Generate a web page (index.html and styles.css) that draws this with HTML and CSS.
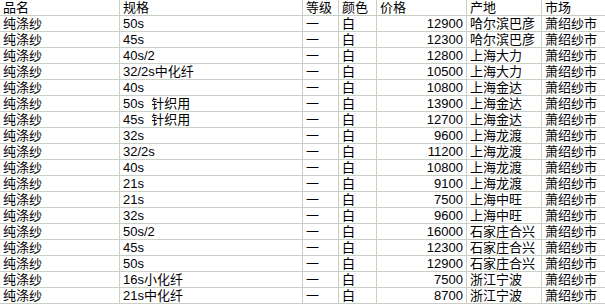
FILE: index.html
```html
<!DOCTYPE html>
<html lang="zh">
<head>
<meta charset="utf-8">
<link rel="stylesheet" href="styles.css">
</head>
<body>
<div class="sheet">
  <div class="row">
    <div class="c">品名</div><div class="c">规格</div><div class="c">等级</div><div class="c">颜色</div><div class="c">价格</div><div class="c">产地</div><div class="c">市场</div>
  </div>
  <div class="row"><div class="c">纯涤纱</div><div class="c">50s</div><div class="c">一</div><div class="c">白</div><div class="c num">12900</div><div class="c">哈尔滨巴彦</div><div class="c">萧绍纱市</div></div>
  <div class="row"><div class="c">纯涤纱</div><div class="c">45s</div><div class="c">一</div><div class="c">白</div><div class="c num">12300</div><div class="c">哈尔滨巴彦</div><div class="c">萧绍纱市</div></div>
  <div class="row"><div class="c">纯涤纱</div><div class="c">40s/2</div><div class="c">一</div><div class="c">白</div><div class="c num">12800</div><div class="c">上海大力</div><div class="c">萧绍纱市</div></div>
  <div class="row"><div class="c">纯涤纱</div><div class="c">32/2s中化纤</div><div class="c">一</div><div class="c">白</div><div class="c num">10500</div><div class="c">上海大力</div><div class="c">萧绍纱市</div></div>
  <div class="row"><div class="c">纯涤纱</div><div class="c">40s</div><div class="c">一</div><div class="c">白</div><div class="c num">10800</div><div class="c">上海金达</div><div class="c">萧绍纱市</div></div>
  <div class="row"><div class="c">纯涤纱</div><div class="c">50s  针织用</div><div class="c">一</div><div class="c">白</div><div class="c num">13900</div><div class="c">上海金达</div><div class="c">萧绍纱市</div></div>
  <div class="row"><div class="c">纯涤纱</div><div class="c">45s  针织用</div><div class="c">一</div><div class="c">白</div><div class="c num">12700</div><div class="c">上海金达</div><div class="c">萧绍纱市</div></div>
  <div class="row"><div class="c">纯涤纱</div><div class="c">32s</div><div class="c">一</div><div class="c">白</div><div class="c num">9600</div><div class="c">上海龙渡</div><div class="c">萧绍纱市</div></div>
  <div class="row"><div class="c">纯涤纱</div><div class="c">32/2s</div><div class="c">一</div><div class="c">白</div><div class="c num">11200</div><div class="c">上海龙渡</div><div class="c">萧绍纱市</div></div>
  <div class="row"><div class="c">纯涤纱</div><div class="c">40s</div><div class="c">一</div><div class="c">白</div><div class="c num">10800</div><div class="c">上海龙渡</div><div class="c">萧绍纱市</div></div>
  <div class="row"><div class="c">纯涤纱</div><div class="c">21s</div><div class="c">一</div><div class="c">白</div><div class="c num">9100</div><div class="c">上海龙渡</div><div class="c">萧绍纱市</div></div>
  <div class="row"><div class="c">纯涤纱</div><div class="c">21s</div><div class="c">一</div><div class="c">白</div><div class="c num">7500</div><div class="c">上海中旺</div><div class="c">萧绍纱市</div></div>
  <div class="row"><div class="c">纯涤纱</div><div class="c">32s</div><div class="c">一</div><div class="c">白</div><div class="c num">9600</div><div class="c">上海中旺</div><div class="c">萧绍纱市</div></div>
  <div class="row"><div class="c">纯涤纱</div><div class="c">50s/2</div><div class="c">一</div><div class="c">白</div><div class="c num">16000</div><div class="c">石家庄合兴</div><div class="c">萧绍纱市</div></div>
  <div class="row"><div class="c">纯涤纱</div><div class="c">45s</div><div class="c">一</div><div class="c">白</div><div class="c num">12300</div><div class="c">石家庄合兴</div><div class="c">萧绍纱市</div></div>
  <div class="row"><div class="c">纯涤纱</div><div class="c">50s</div><div class="c">一</div><div class="c">白</div><div class="c num">12900</div><div class="c">石家庄合兴</div><div class="c">萧绍纱市</div></div>
  <div class="row"><div class="c">纯涤纱</div><div class="c">16s小化纤</div><div class="c">一</div><div class="c">白</div><div class="c num">7500</div><div class="c">浙江宁波</div><div class="c">萧绍纱市</div></div>
  <div class="row"><div class="c">纯涤纱</div><div class="c">21s中化纤</div><div class="c">一</div><div class="c">白</div><div class="c num">8700</div><div class="c">浙江宁波</div><div class="c">萧绍纱市</div></div>
</div>
</body>
</html>
```
FILE: styles.css
```css
html, body {
  margin: 0;
  padding: 0;
  background: #ffffff;
}
.sheet {
  width: 605px;
  font-family: "Liberation Sans", "Noto Sans CJK SC", sans-serif;
  font-size: 13px;
  color: #000000;
}
.row {
  display: grid;
  grid-template-columns: 120px 183px 36px 38px 90px 75px 1fr;
  height: 16px;
}
.c {
  box-sizing: border-box;
  height: 16px;
  line-height: 16px;
  padding: 0 2px 0 3px;
  border-right: 1px solid #c6d0c3;
  border-bottom: 1px solid #c6d0c3;
  white-space: pre;
  overflow: hidden;
}
.c:last-child {
  border-right: none;
}
.num {
  text-align: right;
  padding-right: 3px;
}
```
